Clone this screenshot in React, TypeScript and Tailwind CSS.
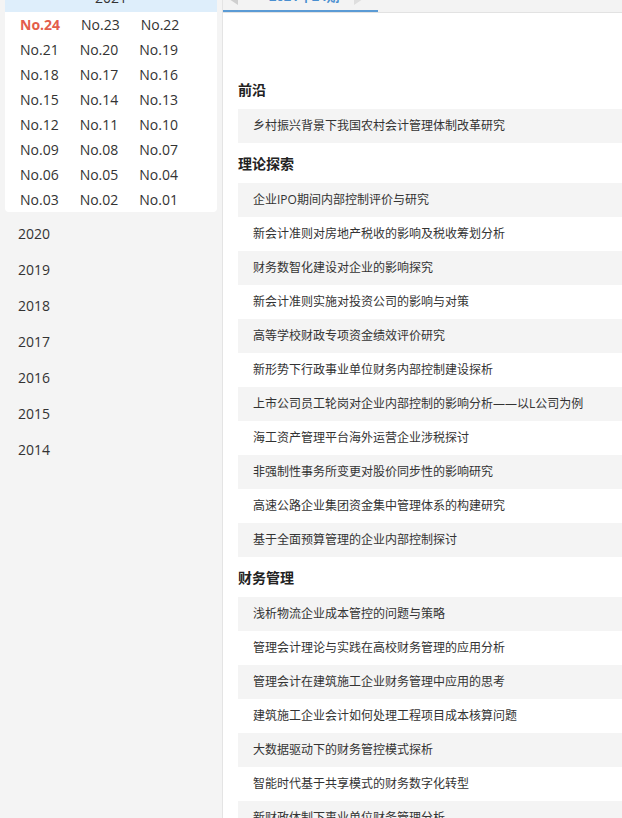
import React from "react";

const ISSUES = [
  ["No.24", "No.23", "No.22"],
  ["No.21", "No.20", "No.19"],
  ["No.18", "No.17", "No.16"],
  ["No.15", "No.14", "No.13"],
  ["No.12", "No.11", "No.10"],
  ["No.09", "No.08", "No.07"],
  ["No.06", "No.05", "No.04"],
  ["No.03", "No.02", "No.01"],
];

const YEARS = ["2020", "2019", "2018", "2017", "2016", "2015", "2014"];

const SECTIONS: { title: string; items: string[] }[] = [
  { title: "前沿", items: ["乡村振兴背景下我国农村会计管理体制改革研究"] },
  {
    title: "理论探索",
    items: [
      "企业IPO期间内部控制评价与研究",
      "新会计准则对房地产税收的影响及税收筹划分析",
      "财务数智化建设对企业的影响探究",
      "新会计准则实施对投资公司的影响与对策",
      "高等学校财政专项资金绩效评价研究",
      "新形势下行政事业单位财务内部控制建设探析",
      "上市公司员工轮岗对企业内部控制的影响分析——以L公司为例",
      "海工资产管理平台海外运营企业涉税探讨",
      "非强制性事务所变更对股价同步性的影响研究",
      "高速公路企业集团资金集中管理体系的构建研究",
      "基于全面预算管理的企业内部控制探讨",
    ],
  },
  {
    title: "财务管理",
    items: [
      "浅析物流企业成本管控的问题与策略",
      "管理会计理论与实践在高校财务管理的应用分析",
      "管理会计在建筑施工企业财务管理中应用的思考",
      "建筑施工企业会计如何处理工程项目成本核算问题",
      "大数据驱动下的财务管控模式探析",
      "智能时代基于共享模式的财务数字化转型",
      "新财政体制下事业单位财务管理分析",
    ],
  },
];

// 侧栏：年份 + 期号
function Sidebar() {
  return (
    <aside className="w-[222px] shrink-0 px-[5px]">
      <div className="bg-white rounded-[4px]">
        <div className="h-[36px] pt-[6px] flex items-center justify-center bg-[#deeefb] rounded-t-[4px] text-[14px] text-[#333]">
          2021
        </div>
        <div className="pl-[15px]">
          {ISSUES.map((row, i) => (
            <div key={i} className="h-[25px] flex items-center">
              {row.map((no) => {
                const active = no === "No.24";
                return (
                  <span
                    key={no}
                    className={`mr-[21px] text-[14px] leading-none ${
                      active ? "font-bold text-[#e35d4b]" : "text-[#333]"
                    }`}
                  >
                    {no}
                  </span>
                );
              })}
            </div>
          ))}
        </div>
      </div>
      <div className="mt-[3px]">
        {YEARS.map((y) => (
          <div key={y} className="h-[36px] flex items-center pl-[13px] text-[14px] text-[#333]">
            {y}
          </div>
        ))}
      </div>
    </aside>
  );
}

function TabBar() {
  return (
    <div className="h-[37px] bg-[#f3f3f3] border-b border-[#e2e2e2] flex">
      <div className="w-[155px] h-[36px] border-b-2 border-[#5b9bd5] flex items-center pt-[8px]">
        <svg width="14" height="16" viewBox="0 0 14 16" className="ml-[2px]">
          <path d="M13 0 L13 16 L1 8 Z" fill="#cfcfcf" />
        </svg>
        <span className="ml-[30px] text-[13px] font-bold text-[#4a8fd0]">2021年24期</span>
        <svg width="12" height="16" viewBox="0 0 12 16" className="ml-[14px]">
          <path d="M0 0 L0 16 L12 8 Z" fill="#dedede" />
        </svg>
      </div>
    </div>
  );
}

export default function App() {
  return (
    <div
      className="w-[622px] h-[818px] overflow-hidden bg-[#f4f4f4]"
      style={{ fontFamily: '"Open Sans", "Noto Sans CJK SC", sans-serif' }}
    >
      <div className="flex -mt-[24px]">
        <Sidebar />
        <main className="flex-1 min-w-0 border-l border-[#e4e4e4] bg-white min-h-[900px]">
          <TabBar />
          <div className="pl-[15px] pt-[56px]">
            {SECTIONS.map((s) => (
              <section key={s.title}>
                <h3 className="h-[40px] flex items-center text-[14px] font-bold text-[#222]">
                  {s.title}
                </h3>
                {s.items.map((t, i) => (
                  <div
                    key={t}
                    className={`h-[34px] flex items-center pl-[15px] text-[12px] text-[#333] whitespace-nowrap ${
                      i % 2 === 0 ? "bg-[#f4f4f4]" : "bg-white"
                    }`}
                  >
                    {t}
                  </div>
                ))}
              </section>
            ))}
          </div>
        </main>
      </div>
    </div>
  );
}
